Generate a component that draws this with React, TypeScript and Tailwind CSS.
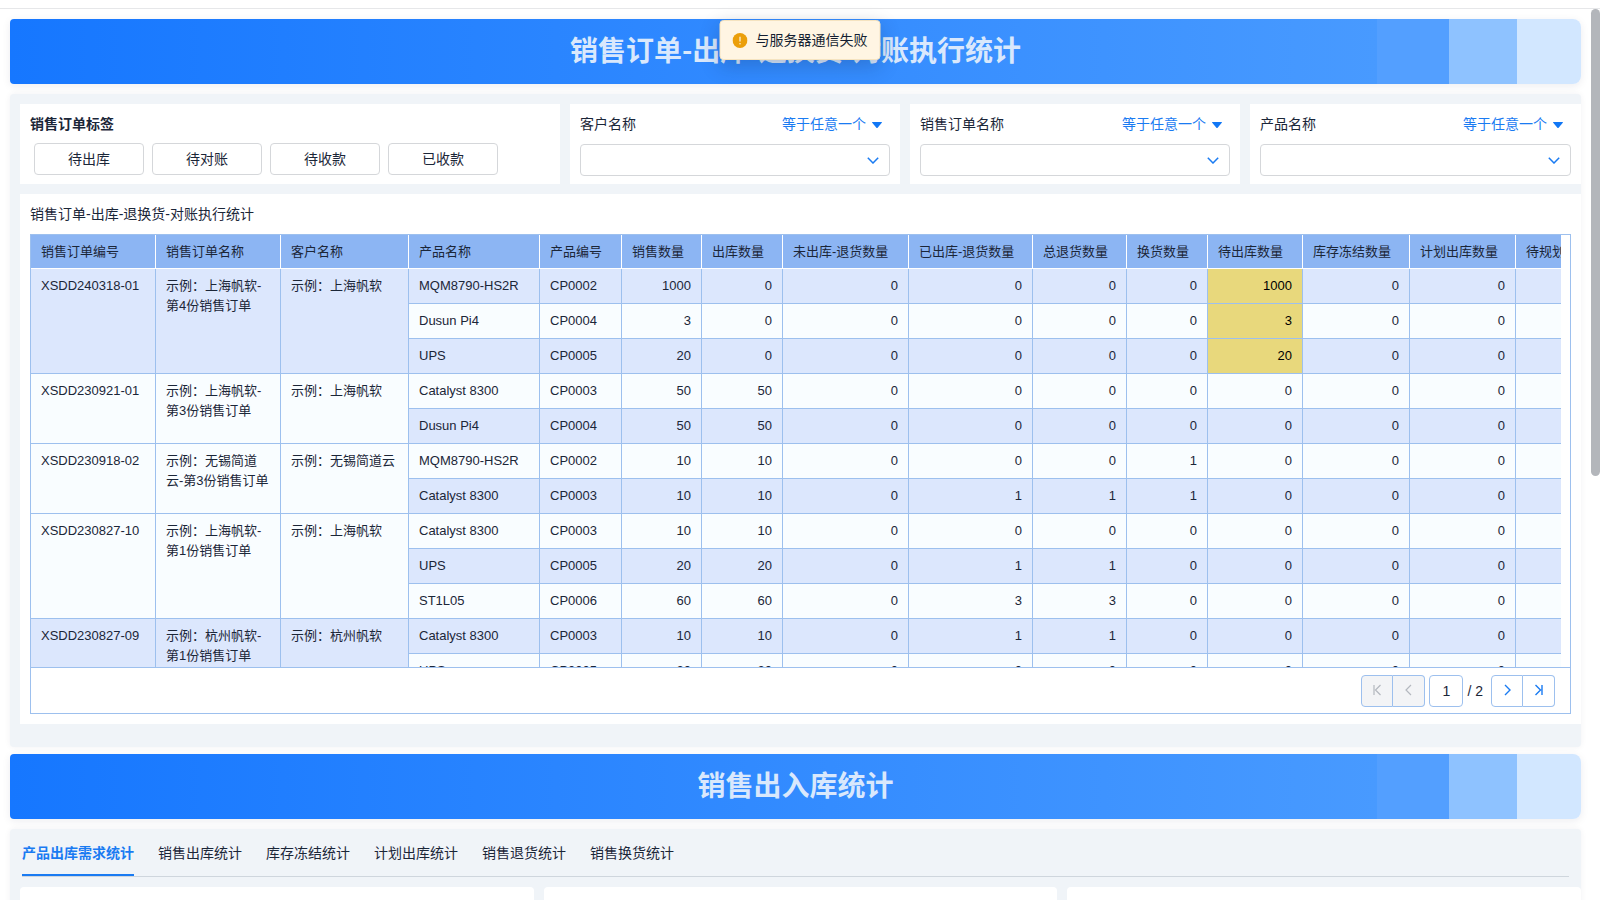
import React, { useId, useState } from 'react'

type Line = [name: string, code: string, ...qty: number[]]

interface Order {
  no: string
  title: string
  customer: string
  lines: Line[]
}

const COLUMNS = [
  { label: '销售订单编号', width: 125 },
  { label: '销售订单名称', width: 125 },
  { label: '客户名称', width: 128 },
  { label: '产品名称', width: 131 },
  { label: '产品编号', width: 82 },
  { label: '销售数量', width: 80 },
  { label: '出库数量', width: 81 },
  { label: '未出库-退货数量', width: 126 },
  { label: '已出库-退货数量', width: 124 },
  { label: '总退货数量', width: 94 },
  { label: '换货数量', width: 81 },
  { label: '待出库数量', width: 95 },
  { label: '库存冻结数量', width: 107 },
  { label: '计划出库数量', width: 106 },
  { label: '待规划数量', width: 94 },
]

const TABLE_WIDTH = COLUMNS.reduce((sum, c) => sum + c.width, 0)

// index of 待出库数量 inside the quantity list of a line
const PENDING = 6

const ORDERS: Order[] = [
  {
    no: 'XSDD240318-01',
    title: '示例：上海帆软-第4份销售订单',
    customer: '示例：上海帆软',
    lines: [
      ['MQM8790-HS2R', 'CP0002', 1000, 0, 0, 0, 0, 0, 1000, 0, 0],
      ['Dusun Pi4', 'CP0004', 3, 0, 0, 0, 0, 0, 3, 0, 0],
      ['UPS', 'CP0005', 20, 0, 0, 0, 0, 0, 20, 0, 0],
    ],
  },
  {
    no: 'XSDD230921-01',
    title: '示例：上海帆软-第3份销售订单',
    customer: '示例：上海帆软',
    lines: [
      ['Catalyst 8300', 'CP0003', 50, 50, 0, 0, 0, 0, 0, 0, 0],
      ['Dusun Pi4', 'CP0004', 50, 50, 0, 0, 0, 0, 0, 0, 0],
    ],
  },
  {
    no: 'XSDD230918-02',
    title: '示例：无锡简道云-第3份销售订单',
    customer: '示例：无锡简道云',
    lines: [
      ['MQM8790-HS2R', 'CP0002', 10, 10, 0, 0, 0, 1, 0, 0, 0],
      ['Catalyst 8300', 'CP0003', 10, 10, 0, 1, 1, 1, 0, 0, 0],
    ],
  },
  {
    no: 'XSDD230827-10',
    title: '示例：上海帆软-第1份销售订单',
    customer: '示例：上海帆软',
    lines: [
      ['Catalyst 8300', 'CP0003', 10, 10, 0, 0, 0, 0, 0, 0, 0],
      ['UPS', 'CP0005', 20, 20, 0, 1, 1, 0, 0, 0, 0],
      ['ST1L05', 'CP0006', 60, 60, 0, 3, 3, 0, 0, 0, 0],
    ],
  },
  {
    no: 'XSDD230827-09',
    title: '示例：杭州帆软-第1份销售订单',
    customer: '示例：杭州帆软',
    lines: [
      ['Catalyst 8300', 'CP0003', 10, 10, 0, 1, 1, 0, 0, 0, 0],
      ['UPS', 'CP0005', 20, 20, 0, 0, 0, 0, 0, 0, 0],
    ],
  },
]

const TAGS = ['待出库', '待对账', '待收款', '已收款']

const TABS = ['产品出库需求统计', '销售出库统计', '库存冻结统计', '计划出库统计', '销售退货统计', '销售换货统计']

function Banner({ title }: { title: string }) {
  return (
    <div className="flex h-[65px] items-center justify-center rounded-l rounded-r-lg bg-[linear-gradient(90deg,#1677ff_0%,#489aff_87%,#539fff_87%,#539fff_91.6%,#8ec2ff_91.6%,#8ec2ff_95.9%,#d2e7ff_95.9%)] shadow-[0_2px_8px_rgba(20,30,60,0.08)]">
      <h1 className="pb-[6px] font-['Noto_Sans_CJK_SC',sans-serif] text-[28px] leading-9 font-bold text-[#d9e8fc]">
        {title}
      </h1>
    </div>
  )
}

function Toast({ text }: { text: string }) {
  return (
    <div
      role="alert"
      className="absolute top-5 left-1/2 flex h-10 -translate-x-1/2 items-center gap-2 rounded border border-[#f5e3c0] bg-[#fff5e3] px-3 shadow-[0_6px_20px_rgba(20,30,60,0.22)]"
    >
      <svg className="size-[15px]" viewBox="0 0 16 16" aria-hidden="true">
        <circle cx="8" cy="8" r="8" fill="#eb9f0b" />
        <path d="M8 4v5" stroke="#fff5e3" strokeWidth="1.3" />
        <circle cx="8" cy="11.4" r="0.8" fill="#fff5e3" />
      </svg>
      <span className="text-sm text-[#141e31]">{text}</span>
    </div>
  )
}

function Filter({ label }: { label: string }) {
  const id = useId()

  return (
    <div className="bg-white px-[10px] pt-[10px]">
      <div className="flex h-5 items-center justify-between">
        <label htmlFor={id} className="text-sm">{label}</label>
        <div className="relative mr-2">
          <select
            aria-label={`${label}条件`}
            className="block h-5 w-[100px] appearance-none text-sm leading-5 text-[#1a7bf2]"
          >
            <option>等于任意一个</option>
          </select>
          <svg className="pointer-events-none absolute top-2 right-0 h-[6px] w-[10px]" viewBox="0 0 10 6" aria-hidden="true">
            <path d="M0.5 0h9a0.5 0.5 0 0 1 0.3 0.8L5.6 5.7a0.8 0.8 0 0 1-1.2 0L0.2 0.8A0.5 0.5 0 0 1 0.5 0z" fill="#1177f5" />
          </svg>
        </div>
      </div>
      <div className="relative mt-[10px]">
        <select
          id={id}
          className="block h-8 w-full appearance-none rounded border border-[#d5d7da] bg-white px-2 text-sm"
        >
          <option></option>
        </select>
        <svg
          className="pointer-events-none absolute top-[13px] right-[11px] h-[7px] w-3"
          viewBox="0 0 12 7"
          fill="none"
          stroke="#1a7bf2"
          strokeWidth="1.5"
          aria-hidden="true"
        >
          <path d="M0.8 0.8 6 6 11.2 0.8" />
        </svg>
      </div>
    </div>
  )
}

function OrderTable() {
  const cell = 'border-r border-b border-[#9dc0ee] px-[10px] py-[7px]'
  let rowIndex = 0

  return (
    <div className="mr-[9px] h-[432px] overflow-hidden">
      <table
        className="table-fixed border-separate border-spacing-0 text-[13px] leading-5"
        style={{ width: TABLE_WIDTH }}
      >
        <colgroup>
          {COLUMNS.map((c) => (
            <col key={c.label} style={{ width: c.width }} />
          ))}
        </colgroup>
        <thead>
          <tr className="h-[34px] bg-[#8cb5f3] text-left whitespace-nowrap">
            {COLUMNS.map((c) => (
              <th key={c.label} className="border-r border-b border-white px-[10px] font-normal">{c.label}</th>
            ))}
          </tr>
        </thead>
        <tbody>
          {ORDERS.map((order) =>
            order.lines.map(([name, code, ...qty], i) => {
              const stripe = rowIndex++ % 2 === 0 ? 'bg-[#dce7fd]' : 'bg-[#f9fdff]'
              return (
                <tr key={order.no + i} className={`h-[35px] align-top ${stripe}`}>
                  {i === 0 && (
                    <>
                      <td rowSpan={order.lines.length} className={cell}>{order.no}</td>
                      <td rowSpan={order.lines.length} className={cell}>{order.title}</td>
                      <td rowSpan={order.lines.length} className={cell}>{order.customer}</td>
                    </>
                  )}
                  <td className={cell}>{name}</td>
                  <td className={cell}>{code}</td>
                  {qty.map((n, q) => (
                    <td
                      key={q}
                      className={`${cell} text-right ${q === PENDING && n > 0 ? 'bg-[#e8d87c] text-black' : ''}`}
                    >
                      {n}
                    </td>
                  ))}
                  <td className={cell}></td>
                </tr>
              )
            })
          )}
        </tbody>
      </table>
    </div>
  )
}

function Pager() {
  const [page, setPage] = useState('1')
  const button = 'flex w-8 items-center justify-center border border-[#9dc0ee] pb-[2px]'
  const icon = 'h-3 w-3 fill-none stroke-current'

  return (
    <div className="flex h-[46px] items-center justify-end border-t border-[#9dc0ee] pr-[15px]">
      <div className="flex h-8 text-[#b4b8bf]">
        <button disabled aria-label="首页" className={`${button} rounded-l bg-[#f3f4f6]`}>
          <svg className={icon} viewBox="0 0 12 12" strokeWidth="1.2">
            <path d="M3 1v10M9.5 1 4.5 6l5 5" />
          </svg>
        </button>
        <button disabled aria-label="上一页" className={`${button} rounded-r border-l-0 bg-[#f3f4f6]`}>
          <svg className={icon} viewBox="0 0 12 12" strokeWidth="1.2">
            <path d="M8 1 3 6l5 5" />
          </svg>
        </button>
      </div>
      <input
        aria-label="页码"
        value={page}
        onChange={(e) => setPage(e.target.value)}
        className="ml-1 h-8 w-[34px] rounded border border-[#9dc0ee] text-center text-sm"
      />
      <span className="mr-2 ml-1 text-sm">/ 2</span>
      <div className="flex h-8 text-[#1a7bf2]">
        <button aria-label="下一页" className={`${button} rounded-l`}>
          <svg className={icon} viewBox="0 0 12 12" strokeWidth="1.4">
            <path d="M4 1l5 5-5 5" />
          </svg>
        </button>
        <button aria-label="末页" className={`${button} rounded-r border-l-0`}>
          <svg className={icon} viewBox="0 0 12 12" strokeWidth="1.4">
            <path d="M2.5 1l5 5-5 5M9 1v10" />
          </svg>
        </button>
      </div>
    </div>
  )
}

export default function App() {
  const [tab, setTab] = useState(TABS[0])

  return (
    <div className="relative flex h-screen flex-col overflow-hidden bg-white font-['Liberation_Sans','Noto_Sans_CJK_SC',sans-serif] text-[#1b2638]">
      <div className="h-[9px] shrink-0 border-b border-[#e6e7e9]" />
      <Toast text="与服务器通信失败" />

      <div className="flex min-h-0 flex-1">
        <main className="min-w-0 flex-1 overflow-hidden pt-[10px] pr-[10px] pl-[10px]">
          <Banner title="销售订单-出库-退换货-对账执行统计" />

          <section className="mt-[10px] rounded bg-[#f0f4f8] pt-[10px] pb-[23px] pl-[10px] shadow-[0_0_6px_rgba(20,30,60,0.06)]">
            <div className="grid grid-cols-[540fr_330fr_330fr_331fr] grid-rows-[80px] gap-[10px]">
              <div className="bg-white px-[10px] pt-[10px]">
                <h2 className="text-sm leading-5 font-bold">销售订单标签</h2>
                <div className="mt-[9px] ml-1 flex gap-2">
                  {TAGS.map((tag) => (
                    <button key={tag} className="h-8 w-[110px] rounded border border-[#d5d7da] bg-white text-sm">
                      {tag}
                    </button>
                  ))}
                </div>
              </div>
              <Filter label="客户名称" />
              <Filter label="销售订单名称" />
              <Filter label="产品名称" />
            </div>

            <div className="mt-[10px] bg-white p-[10px]">
              <h2 className="mb-[10px] text-sm leading-5">销售订单-出库-退换货-对账执行统计</h2>
              <div className="border border-[#9dc0ee]">
                <OrderTable />
                <Pager />
              </div>
            </div>
          </section>

          <div className="mt-[7px]">
            <Banner title="销售出入库统计" />
          </div>

          <section className="mt-[10px] rounded bg-[#f0f4f8] pl-[10px] shadow-[0_0_6px_rgba(20,30,60,0.06)]">
            <div role="tablist" className="mr-3 ml-[2px] flex h-12 gap-6 border-b border-[#cfd6dd]">
              {TABS.map((name) => (
                <button
                  key={name}
                  role="tab"
                  aria-selected={name === tab}
                  onClick={() => setTab(name)}
                  className={`border-b-2 pt-[3px] text-sm ${
                    name === tab ? 'border-[#1a7bf2] font-bold text-[#1a7bf2]' : 'border-transparent'
                  }`}
                >
                  {name}
                </button>
              ))}
            </div>
            <div className="mt-[10px] grid grid-cols-3 gap-[10px]">
              <div className="h-80 rounded bg-white" />
              <div className="h-80 rounded bg-white" />
              <div className="h-80 rounded bg-white" />
            </div>
          </section>
        </main>

        <div className="w-[9px] shrink-0">
          <div className="h-[467px] rounded-full bg-[#b3b6bb]" />
        </div>
      </div>
    </div>
  )
}
